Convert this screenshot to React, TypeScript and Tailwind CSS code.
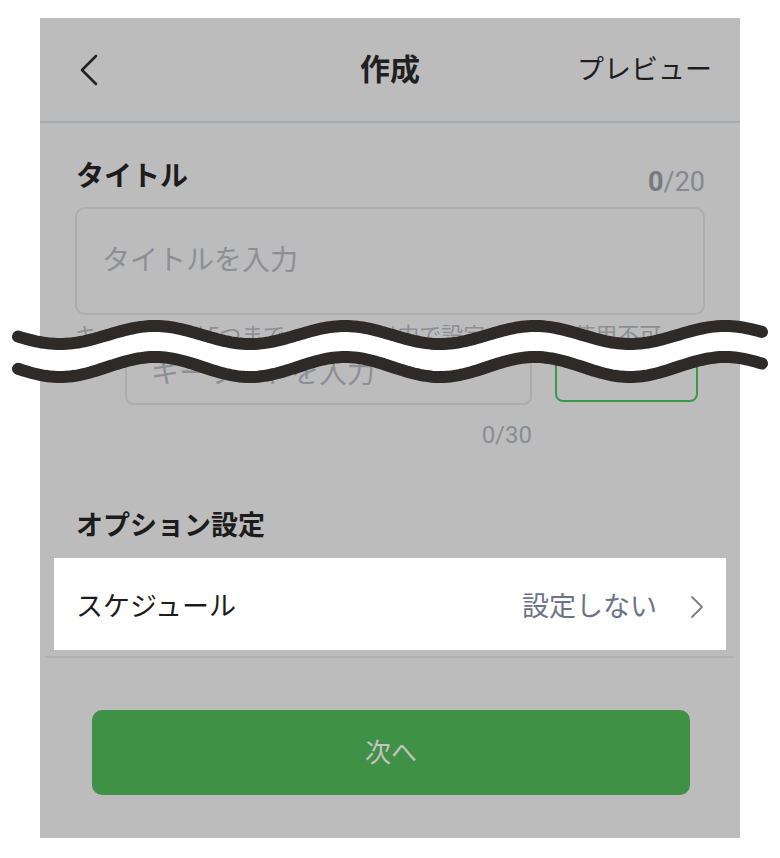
const PERIOD = 190;
const CREST_X = 155;

function wavePoints(mid: number, amp: number) {
  const pts: string[] = [];
  for (let x = 18; x <= 763; x += 3) {
    const y = mid - amp * Math.cos((2 * Math.PI * (x - CREST_X)) / PERIOD);
    pts.push(`${x},${y.toFixed(1)}`);
  }
  return pts;
}

const TOP = wavePoints(335, 9);
const BOTTOM = wavePoints(367, 10);

function CutMark() {
  const fill = "M" + TOP.join(" L") + " L" + [...BOTTOM].reverse().join(" L") + " Z";
  return (
    <svg className="pointer-events-none absolute left-0 top-0" width={780} height={420} viewBox="0 0 780 420">
      <path d={fill} fill="#ffffff" />
      <path d={"M" + TOP.join(" L")} fill="none" stroke="#2d2a27" strokeWidth={12} strokeLinecap="round" />
      <path d={"M" + BOTTOM.join(" L")} fill="none" stroke="#2d2a27" strokeWidth={12} strokeLinecap="round" />
    </svg>
  );
}

export default function App() {
  return (
    <div className="relative min-h-[858px] w-[780px] bg-white pt-[18px] font-['Roboto','Noto_Sans_CJK_JP',sans-serif]">
      <div className="mx-[40px] flex h-[820px] flex-col bg-[#bcbcbc]">
        {/* header */}
        <header className="grid h-[105px] grid-cols-[1fr_auto_1fr] items-center border-b-2 border-[#a8abaf] px-[34px]">
          <svg width="20" height="32" viewBox="0 0 20 32" className="ml-[5px]">
            <polyline points="17,2 3,16 17,30" fill="none" stroke="#222" strokeWidth="2.6" strokeLinecap="round" strokeLinejoin="round" />
          </svg>
          <h1 className="text-[30px] font-bold leading-[40px] text-[#202020]">作成</h1>
          <span className="-mr-[6px] justify-self-end text-[27px] leading-[36px] text-[#1e1e1e]">プレビュー</span>
        </header>

        <div className="px-[35px]">
          <div className="mt-[36px] flex h-[36px] items-start justify-between">
            <span className="pl-[1px] text-[28px] font-bold leading-[36px] text-[#1c1c1c]">タイトル</span>
            <span className="translate-y-[5px] text-[27px] leading-[36px] text-[#86898d]">
              <span className="font-bold text-[#76797d]">0</span>/20
            </span>
          </div>
          <div className="mt-[12px] flex h-[108px] items-center rounded-[10px] border-2 border-[#adadad] pl-[25px]">
            <span className="text-[28px] leading-[36px] text-[#8c8f93]">タイトルを入力</span>
          </div>
          <p className="mt-[10px] whitespace-nowrap text-[22px] leading-[22px] text-[#8c8f93]">
            キーワードは5つまで、30文字以内で設定。記号は使用不可
          </p>
          <div className="-mt-[5px] flex items-start">
            <div className="ml-[50px] flex h-[63px] w-[407px] items-center rounded-[8px] border-2 border-[#adadad] pl-[24px]">
              <span className="text-[28px] leading-[36px] text-[#8c8f93]">キーワードを入力</span>
            </div>
            <div className="ml-[23px] h-[60px] w-[143px] rounded-[8px] border-2 border-[#3a9a45]" />
          </div>
          <div className="w-[457px] pt-[15px] text-right text-[24px] leading-[30px] text-[#8a8d91]">0/30</div>
          <h2 className="mt-[58px] pl-[1px] text-[27px] font-bold leading-[36px] text-[#1c1c1c]">オプション設定</h2>
        </div>

        <div className="mx-[14px] mt-[14px] flex h-[92px] items-center justify-between bg-white pl-[22px] pr-[22px] pt-[6px]">
          <span className="text-[27px] leading-[36px] text-[#1c1c1c]">スケジュール</span>
          <div className="flex items-center gap-[33px]">
            <span className="text-[27px] leading-[36px] text-[#6e7488]">設定しない</span>
            <svg width="14" height="24" viewBox="0 0 14 24">
              <polyline points="2,2 12,12 2,22" fill="none" stroke="#7c7f83" strokeWidth="1.8" strokeLinecap="round" strokeLinejoin="round" />
            </svg>
          </div>
        </div>
        <div className="mx-[5px] mt-[6px] h-[2px] bg-[#b1b1b1]" />

        <button
          type="button"
          className="ml-[52px] mr-[50px] mt-[52px] flex h-[85px] items-center justify-center rounded-[10px] bg-[#3f9146]"
        >
          <span className="text-[26px] leading-[36px] text-[#c3c3c3]">次へ</span>
        </button>
      </div>
      <CutMark />
    </div>
  );
}
